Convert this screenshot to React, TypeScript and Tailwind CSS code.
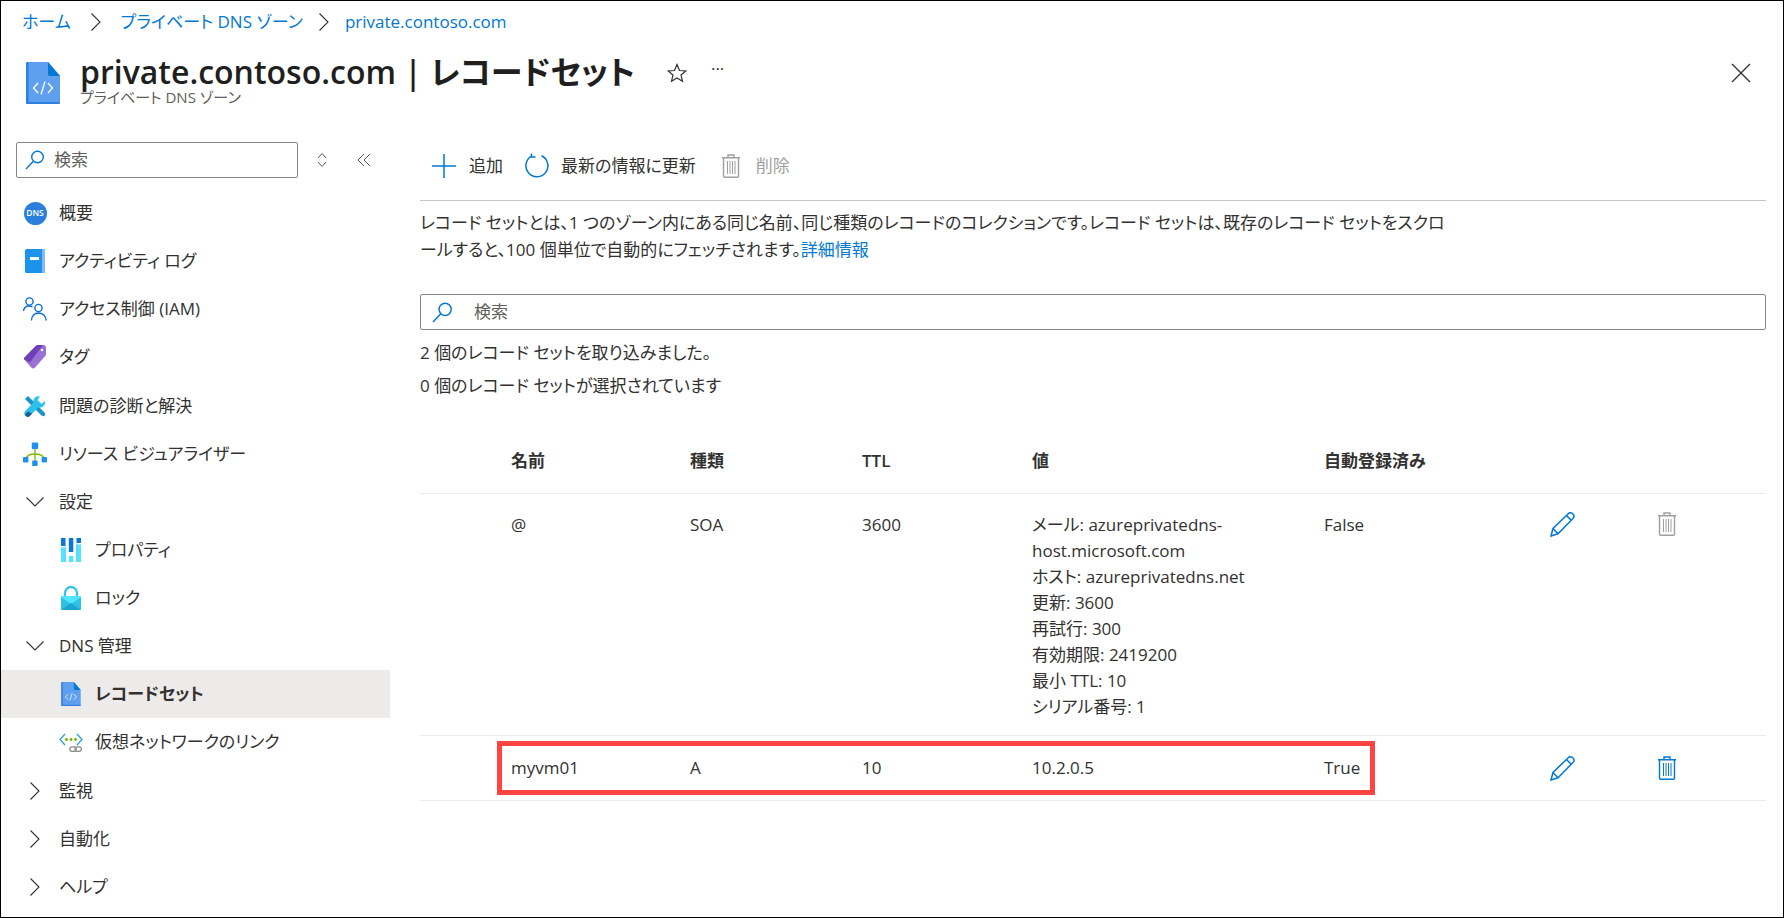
import type { ReactNode } from 'react';

// Azure portal: private DNS zone, record sets blade

function SearchIcon({ className }: { className: string }) {
  return (
    <svg viewBox="0 0 20 20" fill="none" stroke="#0078d4" strokeWidth="1.4" className={className}>
      <circle cx="12.5" cy="7" r="5.8" />
      <path d="M8.4 11.2L1 19" />
    </svg>
  );
}

function FileCodeIcon({ className }: { className: string }) {
  return (
    <svg viewBox="0 0 34 42" className={className}>
      <path d="M1.5 0H22L34 14V40.5a1.5 1.5 0 0 1-1.5 1.5H1.5A1.5 1.5 0 0 1 0 40.5V1.5A1.5 1.5 0 0 1 1.5 0z" fill="#5ea0ef" />
      <path d="M22 0L34 14H24a2 2 0 0 1-2-2z" fill="#0078d4" />
      <path d="M0 1.5V40.5A1.5 1.5 0 0 0 1.5 42H32.5A1.5 1.5 0 0 0 34 40.5V40H2.5V0H1.5A1.5 1.5 0 0 0 0 1.5z" fill="#2f7fe0" />
      <path d="M12 21L7.5 26L12 31M22 21L26.5 26L22 31M19 19.5L15 32.5" fill="none" stroke="#fff" strokeWidth="1.3" />
    </svg>
  );
}

function TrashIcon({ color, className }: { color: string; className: string }) {
  return (
    <svg viewBox="0 0 20 24" fill="none" stroke={color} strokeWidth="1.4" className={className}>
      <path d="M7 3.5V1h6v2.5M1 3.8h18M2.5 4V22a1.2 1.2 0 0 0 1.2 1.2h12.6a1.2 1.2 0 0 0 1.2-1.2V4" />
      <path d="M6.5 7v13M9 7v13M11.5 7v13M14 7v13" strokeWidth="1" />
    </svg>
  );
}

function PencilIcon() {
  return (
    <svg viewBox="0 0 25 25" fill="none" stroke="#0078d4" strokeWidth="1.5" className="w-[25px] h-[25px]">
      <path d="M1 24L3 16.5L18.5 1.5C19.8 0.4 21.5 0.6 22.8 1.8C24.2 3.2 24.4 5 23.2 6.3L8 21.8z" />
      <path d="M3 16.5L8 21.8M16.5 3.5L21.5 8.5" />
    </svg>
  );
}

function Chevron({ open }: { open: boolean }) {
  return open ? (
    <svg viewBox="0 0 18 10" fill="none" stroke="#323130" strokeWidth="1.1" className="w-[18px] h-[10px]">
      <path d="M0.5 0.5L9 9L17.5 0.5" />
    </svg>
  ) : (
    <svg viewBox="0 0 10 18" fill="none" stroke="#323130" strokeWidth="1.1" className="w-[10px] h-[18px]">
      <path d="M0.5 0.5L9 9L0.5 17.5" />
    </svg>
  );
}

function DnsIcon() {
  return (
    <div className="w-[23px] h-[23px] rounded-full bg-[#2a7fdc] flex items-center justify-center text-white text-[8.5px] font-semibold leading-none">
      DNS
    </div>
  );
}

function BookIcon() {
  return (
    <svg viewBox="0 0 20 24" className="w-[20px] h-[24px]">
      <rect x="0" y="0" width="20" height="24" rx="1.5" fill="#1b93eb" />
      <path d="M17 0H18.5A1.5 1.5 0 0 1 20 1.5V22.5A1.5 1.5 0 0 1 18.5 24H17z" fill="#83b9f9" />
      <rect x="5" y="8" width="9" height="3" fill="#fff" />
    </svg>
  );
}

function PeopleIcon() {
  return (
    <svg viewBox="0 0 24 24" fill="none" stroke="#0b6cd8" strokeWidth="1.4" className="w-[24px] h-[24px]">
      <circle cx="6.5" cy="4.5" r="3.6" />
      <circle cx="15.5" cy="11" r="3.6" />
      <path d="M0.5 14C1 10.5 3 9 6 9C7.5 9 8.5 9.3 9.5 10M8.5 23.5C8.5 19 11.5 16 15.5 16C19.5 16 23 19 23.2 23.5" />
    </svg>
  );
}

function TagIcon() {
  return (
    <svg viewBox="0 0 22 24" className="w-[22px] h-[24px]">
      <path d="M0.5 12.5L12 0.8C12.5 0.3 13 0 14 0H19.5C21 0 22 1 22 2.5V9C22 10 21.7 10.6 21 11.3L11 22.5C10 23.8 8.5 23.8 7.5 22.7L0.5 14.8C-0.2 14 -0.2 13.2 0.5 12.5z" fill="#9a72d6" />
      <path d="M0.5 12.5L12 0.8C12.5 0.3 13 0 14 0H19L6 17.5L0.5 14.8C-0.2 14 -0.2 13.2 0.5 12.5z" fill="#6f40b8" />
      <circle cx="18" cy="5" r="1.8" fill="#fff" stroke="#6f40b8" strokeWidth="0.6" />
    </svg>
  );
}

function ToolsIcon() {
  return (
    <svg viewBox="0 0 22 22" className="w-[22px] h-[22px]">
      <path d="M1 4L4 1L19.5 16.5C21 18 21.5 18.5 21 20L20 21C18.5 21.5 18 21 16.5 19.5z" fill="#1a93c9" />
      <path d="M16 1.5A5 5 0 0 0 9.5 7.5L0.8 16.5C0 17.5 0 18.8 0.8 19.8L2.2 21.2C3.2 22 4.5 22 5.5 21.2L14.5 12.3A5 5 0 0 0 20.8 6L17.5 9L13.5 5z" fill="#2cc1ea" />
      <path d="M0.8 19.8L2.2 21.2C3.2 22 4.5 22 5.5 21.2L8 18.5L4 16.5z" fill="#0f5f8f" />
    </svg>
  );
}

function ResourceIcon() {
  return (
    <svg viewBox="0 0 24 24" className="w-[24px] h-[24px]">
      <path d="M12 6V21M3 16.5C4 13 8 12 12 12C16 12 20 13 21 16.5" fill="none" stroke="#7fba00" strokeWidth="1.3" />
      <rect x="8.8" y="0.5" width="6.4" height="6.4" rx="0.8" fill="#1b93eb" />
      <rect x="0" y="15" width="5.4" height="5.4" rx="0.8" fill="#1b93eb" />
      <rect x="18.6" y="15" width="5.4" height="5.4" rx="0.8" fill="#1b93eb" />
      <rect x="9.2" y="18.6" width="5.4" height="5.4" rx="0.8" fill="#1b93eb" />
    </svg>
  );
}

function PropertiesIcon() {
  return (
    <svg viewBox="0 0 20 24" className="w-[20px] h-[24px]">
      <rect x="0" y="0" width="4.5" height="24" fill="#0b78d4" />
      <rect x="0" y="9" width="4.5" height="15" fill="#50e6ff" />
      <rect x="7.8" y="0" width="4.5" height="14" fill="#0b78d4" />
      <rect x="7.8" y="18" width="4.5" height="6" fill="#50e6ff" />
      <rect x="15.5" y="0" width="4.5" height="24" fill="#0b78d4" />
      <rect x="15.5" y="6" width="4.5" height="18" fill="#50e6ff" />
      <rect x="0" y="8" width="4.5" height="1.4" fill="#fff" />
      <rect x="15.5" y="5" width="4.5" height="1.4" fill="#fff" />
    </svg>
  );
}

function LockIcon() {
  return (
    <svg viewBox="0 0 20 24" className="w-[20px] h-[24px]">
      <path d="M4 11V7a6 6 0 0 1 12 0v4" fill="none" stroke="#36c5e8" strokeWidth="2.4" />
      <rect x="0" y="10" width="20" height="14" rx="1" fill="#50e6ff" />
      <path d="M0 11L10 18L20 11V23a1 1 0 0 1-1 1H1a1 1 0 0 1-1-1z" fill="#2fc1e6" />
      <path d="M0 24L10 17L20 24z" fill="#1ca6cf" />
    </svg>
  );
}

function VnetLinkIcon() {
  return (
    <svg viewBox="0 0 24 22" className="w-[24px] h-[22px]">
      <path d="M6 3L1 8.5L6 14M18 3L23 8.5L18 14" fill="none" stroke="#2aa0d8" strokeWidth="1.3" />
      <circle cx="7.5" cy="8.5" r="1.4" fill="#6bb700" />
      <circle cx="12" cy="8.5" r="1.4" fill="#6bb700" />
      <circle cx="16.5" cy="8.5" r="1.4" fill="#6bb700" />
      <rect x="10.8" y="15.8" width="6.4" height="4.6" rx="2.3" fill="none" stroke="#8a8886" strokeWidth="1.2" />
      <rect x="16" y="15.8" width="6.4" height="4.6" rx="2.3" fill="none" stroke="#8a8886" strokeWidth="1.2" />
    </svg>
  );
}

type NavItem = {
  label: string;
  level: 1 | 2;
  icon?: ReactNode;
  expand?: 'open' | 'closed';
  active?: boolean;
};

const navItems: NavItem[] = [
  { label: '概要', level: 1, icon: <DnsIcon /> },
  { label: 'アクティビティ ログ', level: 1, icon: <BookIcon /> },
  { label: 'アクセス制御 (IAM)', level: 1, icon: <PeopleIcon /> },
  { label: 'タグ', level: 1, icon: <TagIcon /> },
  { label: '問題の診断と解決', level: 1, icon: <ToolsIcon /> },
  { label: 'リソース ビジュアライザー', level: 1, icon: <ResourceIcon /> },
  { label: '設定', level: 1, expand: 'open' },
  { label: 'プロパティ', level: 2, icon: <PropertiesIcon /> },
  { label: 'ロック', level: 2, icon: <LockIcon /> },
  { label: 'DNS 管理', level: 1, expand: 'open' },
  { label: 'レコードセット', level: 2, icon: <FileCodeIcon className="w-[20px] h-[24px]" />, active: true },
  { label: '仮想ネットワークのリンク', level: 2, icon: <VnetLinkIcon /> },
  { label: '監視', level: 1, expand: 'closed' },
  { label: '自動化', level: 1, expand: 'closed' },
  { label: 'ヘルプ', level: 1, expand: 'closed' },
];

function NavRow({ item }: { item: NavItem }) {
  return (
    <div
      className={`h-[48.14px] flex items-center ${item.active ? 'bg-[#edebe9] font-semibold' : ''} ${
        item.level === 2 ? 'pl-[57px]' : 'pl-[21px]'
      }`}
    >
      <div className="w-[26px] h-[26px] flex items-center justify-center shrink-0">
        {item.expand ? <Chevron open={item.expand === 'open'} /> : item.icon}
      </div>
      <span className="ml-[11px] whitespace-nowrap">{item.label}</span>
    </div>
  );
}

const recordGrid = 'grid grid-cols-[91px_179px_172px_170px_292px_226px_107px_1fr]';

export default function App() {
  return (
    <div className="w-[1784px] h-[918px] overflow-hidden bg-white border border-black flex flex-col text-[#323130] text-[17px] leading-[26px] font-['Open_Sans','Noto_Sans_CJK_JP',sans-serif] [font-feature-settings:'palt']">
      <nav className="h-[41px] pl-[21px] flex items-center text-[#0078d4] whitespace-nowrap">
        <span>ホーム</span>
        <span className="mx-[20px] text-[#605e5c]"><Chevron open={false} /></span>
        <span>プライベート DNS ゾーン</span>
        <span className="mx-[16px] text-[#605e5c]"><Chevron open={false} /></span>
        <span>private.contoso.com</span>
      </nav>

      <header className="h-[78px] flex items-start pl-[25px] pr-[32px]">
        <FileCodeIcon className="w-[34px] h-[42px] mt-[20px] shrink-0" />
        <div className="ml-[20px] mt-[10px]">
          <h1 className="text-[32px] leading-[40px] font-semibold whitespace-nowrap text-[#201f1e]">
            private.contoso.com | レコードセット
          </h1>
          <p className="text-[15px] leading-[20px] mt-[-5px] text-[#605e5c] whitespace-nowrap">プライベート DNS ゾーン</p>
        </div>
        <svg viewBox="0 0 20 20" fill="none" stroke="#323130" strokeWidth="1.2" className="w-[20px] h-[20px] ml-[32px] mt-[21px]">
          <path d="M10 1.5L12.5 7.5L18.8 8L14 12L15.5 18.3L10 15L4.5 18.3L6 12L1.2 8L7.5 7.5z" />
        </svg>
        <span className="ml-[24px] mt-[14px] text-[#323130]">···</span>
        <svg viewBox="0 0 20 20" fill="none" stroke="#323130" strokeWidth="1.3" className="w-[20px] h-[20px] ml-auto mt-[21px]">
          <path d="M1 1L19 19M19 1L1 19" />
        </svg>
      </header>

      <div className="flex flex-1 min-h-0">
        <aside className="w-[389px] pt-[22px] shrink-0">
          <div className="flex items-center pl-[15px]">
            <div className="w-[282px] h-[36px] border border-[#8a8886] rounded-[2px] flex items-center pl-[8px]">
              <SearchIcon className="w-[20px] h-[20px]" />
              <span className="ml-[9px] text-[#605e5c]">検索</span>
            </div>
            <svg viewBox="0 0 10 16" fill="none" stroke="#605e5c" strokeWidth="1" className="w-[10px] h-[16px] ml-[19px]">
              <path d="M1 6L5 1.5L9 6M1 10L5 14.5L9 10" />
            </svg>
            <svg viewBox="0 0 14 14" fill="none" stroke="#605e5c" strokeWidth="1" className="w-[14px] h-[14px] ml-[30px]">
              <path d="M7 1L1 7L7 13M13 1L7 7L13 13" />
            </svg>
          </div>
          <div className="mt-[11px]">
            {navItems.map((item) => (
              <NavRow key={item.label} item={item} />
            ))}
          </div>
        </aside>

        <main className="flex-1 pl-[30px] pr-[17px] pt-[26px] min-w-0">
          <div className="h-[55px] border-b border-[#c8c6c4] pb-[15px] flex items-center whitespace-nowrap">
            <svg viewBox="0 0 24 24" fill="none" stroke="#0078d4" strokeWidth="1.5" className="w-[24px] h-[24px] ml-[12px]">
              <path d="M12 0V24M0 12H24" />
            </svg>
            <span className="ml-[13px]">追加</span>
            <svg viewBox="0 0 25 25" fill="none" stroke="#0078d4" strokeWidth="1.5" className="w-[25px] h-[25px] ml-[22px]">
              <path d="M16.5 2.8A11 11 0 1 1 6.5 3.2" />
              <path d="M6.5 0.5V4H10.5" />
            </svg>
            <span className="ml-[11px]">最新の情報に更新</span>
            <TrashIcon color="#a19f9d" className="w-[20px] h-[24px] ml-[25px]" />
            <span className="ml-[15px] text-[#a19f9d]">削除</span>
          </div>

          <p className="mt-[8px] leading-[27px] whitespace-nowrap">
            レコード セットとは、1 つのゾーン内にある同じ名前、同じ種類のレコードのコレクションです。レコード セットは、既存のレコード セットをスクロ
            <br />
            ールすると、100 個単位で自動的にフェッチされます。<span className="text-[#0078d4]">詳細情報</span>
          </p>

          <div className="mt-[31px] h-[36px] border border-[#8a8886] rounded-[2px] flex items-center pl-[11px]">
            <SearchIcon className="w-[21px] h-[21px]" />
            <span className="ml-[21px] text-[#605e5c]">検索</span>
          </div>

          <p className="leading-[33px] mt-[6px]">2 個のレコード セットを取り込みました。</p>
          <p className="leading-[33px]">0 個のレコード セットが選択されています</p>

          <div className={`${recordGrid} border-b border-[#edebe9] pt-[46px] pb-[19px] font-semibold`}>
            <div />
            <div>名前</div>
            <div>種類</div>
            <div>TTL</div>
            <div>値</div>
            <div>自動登録済み</div>
          </div>

          <div className={`${recordGrid} border-b border-[#edebe9] pt-[18px] pb-[15px]`}>
            <div />
            <div>@</div>
            <div>SOA</div>
            <div>3600</div>
            <div>
              <div>メール: azureprivatedns-</div>
              <div>host.microsoft.com</div>
              <div>ホスト: azureprivatedns.net</div>
              <div>更新: 3600</div>
              <div>再試行: 300</div>
              <div>有効期限: 2419200</div>
              <div>最小 TTL: 10</div>
              <div>シリアル番号: 1</div>
            </div>
            <div>False</div>
            <PencilIcon />
            <TrashIcon color="#a19f9d" className="w-[20px] h-[24px]" />
          </div>

          <div className={`${recordGrid} relative h-[65px] items-center border-b border-[#edebe9]`}>
            <div />
            <div>myvm01</div>
            <div>A</div>
            <div>10</div>
            <div>10.2.0.5</div>
            <div>True</div>
            <PencilIcon />
            <TrashIcon color="#0078d4" className="w-[20px] h-[24px]" />
            <div className="absolute left-[77px] top-[5px] w-[878px] h-[54px] border-[5px] border-[#ff4444]" />
          </div>
        </main>
      </div>
    </div>
  );
}
